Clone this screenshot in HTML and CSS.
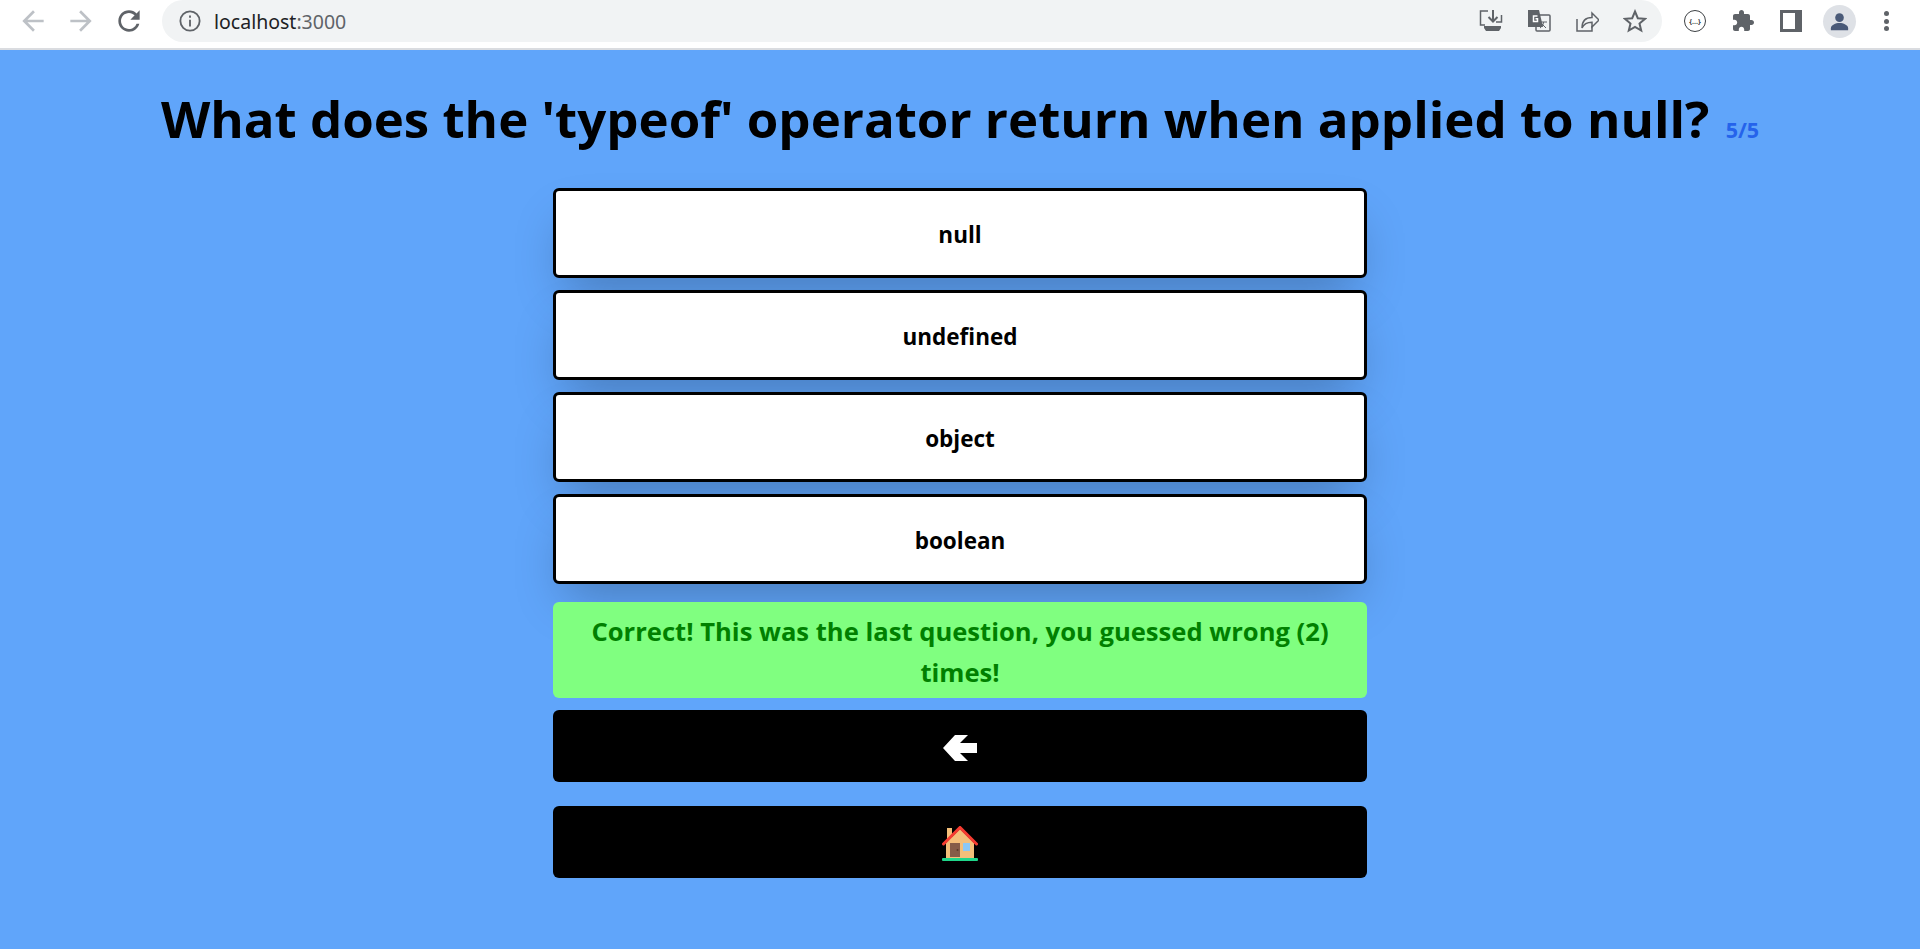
FILE: index.html
```html
<!DOCTYPE html>
<html lang="en">
<head>
    <meta charset="UTF-8">
    <meta name="viewport" content="width=device-width, initial-scale=1.0">
    <title>Quiz</title>
    <link rel="stylesheet" href="styles.css">
</head>
<body>
    <div class="toolbar">
        <div class="nav-icons">
            <svg class="icon" viewBox="3 3 18 18"><path d="M20 11H7.830l5.590-5.590L12 4l-8 8 8 8 1.410-1.410L7.830 13H20v-2z" class="fill light"/></svg>
            <svg class="icon" viewBox="3 3 18 18"><path d="M12 4l-1.410 1.410L16.170 11H4v2h12.170l-5.580 5.590L12 20l8-8z" class="fill light"/></svg>
            <svg class="icon" viewBox="3 3 18 18"><path d="M17.650 6.350C16.200 4.900 14.210 4 12 4c-4.420 0-7.990 3.580-7.990 8s3.570 8 7.990 8c3.730 0 6.840-2.550 7.730-6h-2.080c-.82 2.330-3.040 4-5.650 4-3.310 0-6-2.690-6-6s2.690-6 6-6c1.660 0 3.140.69 4.220 1.780L13 11h7V4l-2.350 2.350z" class="fill"/></svg>
        </div>
        <div class="omnibox">
            <svg class="icon info" viewBox="0 0 24 24"><circle cx="12" cy="12" r="10.500" class="stroke"/><path d="M12 10.500v7.500M12 6v2.500" class="stroke"/></svg>
            <span class="url">localhost<span class="url-port">:3000</span></span>
            <div class="omni-actions">
                <svg class="icon" viewBox="0 0 24 24"><path d="M9 2H1.500v14H6M17 13h5.500V6" class="stroke thin"/><path d="M14 1v11M9.500 8l4.500 4.500L18.500 8" class="stroke"/><path d="M5 17h17v2l-2 3H7l-2-3z" class="fill"/></svg>
                <svg class="icon" viewBox="0 0 24 24"><rect x="9" y="6" width="14" height="16" rx="1" fill="#fff" class="stroke thin"/><path d="M1 1h11l4 17H1z" class="fill"/><path d="M10.500 7H6.500v5.500h4V9.800H8.500" fill="none" stroke="#fff" stroke-width="1.500"/><path d="M13 13h7M16.500 13c0 3-2 5-3.500 6M15 15l4 4" class="stroke hair"/></svg>
                <svg class="icon" viewBox="0 0 24 24"><path d="M2 10v12h15v-5" class="stroke thin"/><path d="M7 19c0-7 4-10.500 10-10.500V4l7 7-7 7v-4.800c-4.500 0-8 1.300-10 5.800z" class="stroke thin"/></svg>
                <svg class="icon" viewBox="0 0 24 24"><path d="M12 2.500l2.800 6.700 7.200.6-5.500 4.700 1.700 7L12 17.800l-6.200 3.700 1.700-7L2 9.800l7.200-.6z" class="stroke"/></svg>
            </div>
        </div>
        <div class="ext-icons">
            <svg class="icon" viewBox="0 0 24 24"><circle cx="12" cy="12" r="10.500" fill="none" stroke="#3c4043" stroke-width="1"/><text x="12" y="14.500" class="ext-text">{...}</text></svg>
            <svg class="icon" viewBox="0 0 24 24"><path d="M20.500 11H19V7c0-1.100-.9-2-2-2h-4V3.500C13 2.120 11.880 1 10.500 1S8 2.120 8 3.500V5H4c-1.100 0-1.990.9-1.990 2v3.800H3.500c1.490 0 2.700 1.210 2.700 2.700s-1.210 2.700-2.700 2.700H2V20c0 1.100.9 2 2 2h3.800v-1.500c0-1.490 1.210-2.700 2.700-2.700 1.490 0 2.700 1.210 2.700 2.700V22H17c1.100 0 2-.9 2-2v-4h1.500c1.380 0 2.500-1.120 2.500-2.500S21.880 11 20.500 11z" class="fill"/></svg>
            <svg class="icon" viewBox="0 0 24 24"><path d="M1 1h22v22H1zM4 4v16h12V4z" class="fill" fill-rule="evenodd"/></svg>
            <div class="avatar">
                <svg viewBox="0 0 24 24"><circle cx="12" cy="8" r="4.500" fill="#4a5a78"/><path d="M3 21v-2c0-3.500 5-5.500 9-5.500s9 2 9 5.500v2z" fill="#4a5a78"/></svg>
            </div>
            <div class="menu-dots"><span></span><span></span><span></span></div>
        </div>
    </div>

    <main class="quiz">
        <h1 class="question">What does the 'typeof' operator return when applied to null? <span class="count">5/5</span></h1>

        <div class="answers">
            <button class="answer">null</button>
            <button class="answer">undefined</button>
            <button class="answer">object</button>
            <button class="answer">boolean</button>

            <div class="result">Correct! This was the last question, you guessed wrong (2) times!</div>

            <button class="action">
                <svg class="action-icon" viewBox="0 0 34 26"><path d="M0 13L12 0H25L17 8H34V18H17L25 26H12Z" fill="#fff"/></svg>
            </button>
            <button class="action action-home">
                <svg class="action-icon home" viewBox="0 0 36 36">
                    <rect x="5" y="2" width="5" height="14" fill="#f4bf7a"/>
                    <path d="M4 17L18 3l14 14v15H4z" fill="#f4bf7a"/>
                    <rect x="8" y="17" width="10" height="14" fill="#855c48"/>
                    <circle cx="15.500" cy="24" r="1" fill="#5a3a2a"/>
                    <rect x="21" y="17" width="7" height="8" fill="#8cc8f5"/>
                    <path d="M1.500 18L18 1.500 34.500 18" fill="none" stroke="#f63b30" stroke-width="3" stroke-linecap="round"/>
                    <rect x="0" y="32" width="36" height="3" rx="1" fill="#1fd68a"/>
                </svg>
            </button>
        </div>
    </main>
</body>
</html>
```

FILE: styles.css
```css
* {
    box-sizing: border-box;
}

html, body {
    margin: 0;
    padding: 0;
}

body {
    font-family: 'Open Sans', 'Noto Sans', sans-serif;
    background-color: #60a5fa;
    min-height: 949px;
}

.toolbar {
    height: 50px;
    background-color: #fff;
    border-bottom: 2px solid #dadce0;
    display: flex;
    align-items: flex-start;
}

.icon {
    width: 24px;
    height: 24px;
    display: block;
    flex-shrink: 0;
}

.stroke {
    fill: none;
    stroke: #5f6368;
    stroke-width: 2;
}

.stroke.thin {
    stroke-width: 1.5;
}

.stroke.hair {
    stroke-width: 1;
}

.fill {
    fill: #5f6368;
}

.fill.light {
    fill: #bdc1c6;
}

.nav-icons {
    display: flex;
    gap: 24px;
    padding: 9px 0 0 21px;
    width: 162px;
}

.omnibox {
    width: 1500px;
    height: 42px;
    background-color: #f1f3f4;
    border-radius: 21px;
    display: flex;
    align-items: center;
    padding-left: 17px;
}

.info {
    width: 22px;
    height: 22px;
}

.url {
    font-family: 'Noto Sans', sans-serif;
    font-size: 19.500px;
    color: #202124;
    margin-left: 13px;
}

.url-port {
    color: #5f6368;
}

.omni-actions {
    display: flex;
    gap: 24px;
    margin-left: auto;
    padding-right: 15px;
}

.ext-icons {
    display: flex;
    align-items: center;
    gap: 24px;
    height: 42px;
    padding-left: 21px;
}

.ext-text {
    font-size: 7px;
    font-weight: 700;
    text-anchor: middle;
    fill: #3c4043;
}

.avatar {
    width: 33px;
    height: 33px;
    border-radius: 50%;
    background-color: #dee1e6;
    margin-left: -4px;
    padding: 5px;
}

.avatar svg {
    display: block;
}

.menu-dots {
    display: flex;
    flex-direction: column;
    gap: 2.500px;
    margin-left: 4px;
}

.menu-dots span {
    width: 5px;
    height: 5px;
    border-radius: 50%;
    background-color: #5f6368;
}

.quiz {
    display: flex;
    flex-direction: column;
    align-items: center;
}

.question {
    margin: 38px 0 0;
    font-size: 51px;
    line-height: 60px;
    font-weight: 700;
    color: #000;
    text-align: center;
}

.count {
    font-size: 21.500px;
    line-height: 1;
    color: #2563eb;
    margin-left: 3px;
}

.answers {
    width: 814px;
    margin-top: 40px;
    display: flex;
    flex-direction: column;
}

.answer {
    height: 90px;
    margin-bottom: 12px;
    padding: 2px 0 0;
    background-color: #fff;
    border: 3px solid #000;
    border-radius: 6px;
    box-shadow: 0 25px 50px -12px rgba(0, 0, 0, 0.25);
    font-family: inherit;
    font-size: 22.500px;
    font-weight: 700;
    color: #000;
}

.result {
    margin-top: 6px;
    height: 96px;
    padding: 9px 24px 0;
    background-color: #80ff80;
    border-radius: 6px;
    color: #008000;
    font-size: 25.600px;
    font-weight: 700;
    line-height: 41px;
    text-align: center;
}

.action {
    height: 72px;
    margin-top: 12px;
    padding: 4px 0 0;
    background-color: #000;
    border: none;
    border-radius: 6px;
    display: flex;
    align-items: center;
    justify-content: center;
}

.action-home {
    margin-top: 24px;
}

.action-icon {
    width: 34px;
    height: 26px;
    display: block;
}

.action-icon.home {
    width: 36px;
    height: 36px;
}
```
